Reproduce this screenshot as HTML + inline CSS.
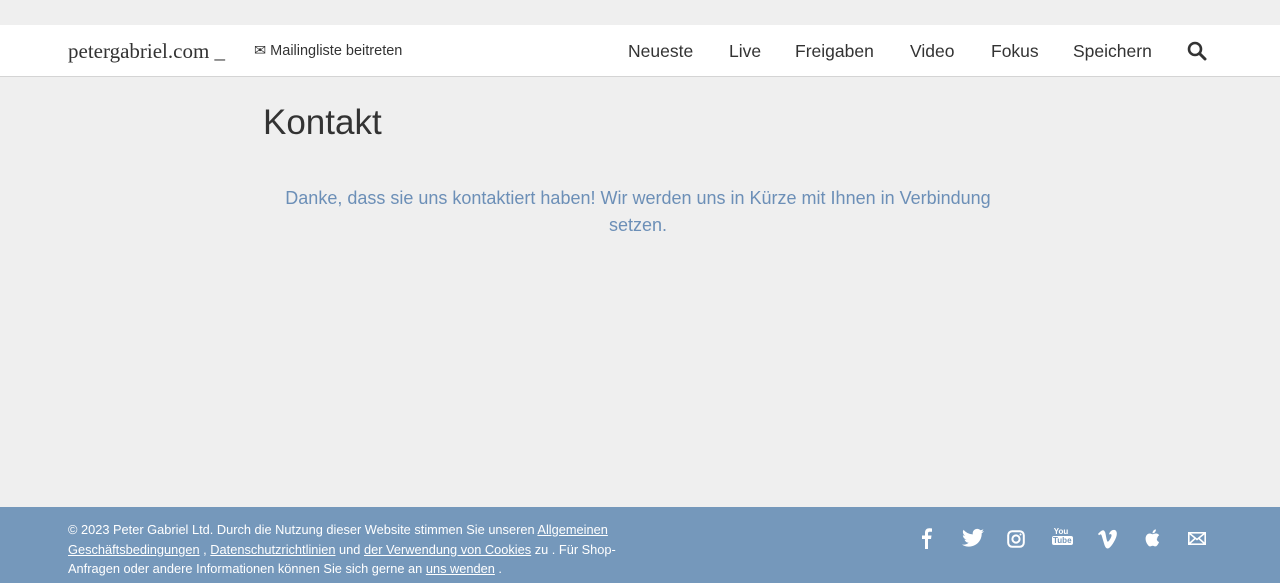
<!DOCTYPE html>
<html><head><meta charset="utf-8"><style>
body{margin:0;width:1280px;height:583px;background:#efefef;font-family:"Liberation Sans",sans-serif;position:relative;overflow:hidden}
.hdr{position:absolute;top:25px;left:0;width:1280px;height:51px;background:#fff;border-bottom:1px solid #d4d4d4}
.logo{position:absolute;left:68px;top:14px;font-family:"Liberation Serif",serif;font-size:21px;color:#333}
.mail{position:absolute;left:254px;top:18px;font-size:14.5px;color:#333}
.nav{position:absolute;top:16px;font-size:17.5px;color:#333}
h1{position:absolute;left:263px;top:103px;margin:0;font-weight:normal;font-size:35px;color:#333}
.msg{position:absolute;left:273px;top:185px;width:730px;text-align:center;color:#6c8fb7;font-size:18px;line-height:27px}
.ft{position:absolute;left:0;top:507px;width:1280px;height:76px;background:#7598bb;color:#fff}
.ft p{position:absolute;left:68px;top:13px;margin:0;width:560px;font-size:12.8px;line-height:19.5px}
.ft a{color:#fff;text-decoration:underline}
.ic{position:absolute;top:20px}
</style></head><body>
<div class="hdr">
<div class="logo">petergabriel.com _</div>
<div class="mail">✉ Mailingliste beitreten</div>
<div class="nav" style="left:628px">Neueste</div>
<div class="nav" style="left:729px">Live</div>
<div class="nav" style="left:795px">Freigaben</div>
<div class="nav" style="left:910px">Video</div>
<div class="nav" style="left:991px">Fokus</div>
<div class="nav" style="left:1073px">Speichern</div>
<svg style="position:absolute;left:1187px;top:16px" width="20" height="20" viewBox="0 0 20 20"><circle cx="8" cy="8" r="6" fill="none" stroke="#333" stroke-width="2.6"/><path d="M12.5 12.5L18 18" stroke="#333" stroke-width="3" stroke-linecap="round"/></svg>
</div>
<h1>Kontakt</h1>
<div class="msg">Danke, dass sie uns kontaktiert haben! Wir werden uns in Kürze mit Ihnen in Verbindung setzen.</div>
<div class="ft">
<p>© 2023 Peter Gabriel Ltd. Durch die Nutzung dieser Website stimmen Sie unseren <a>Allgemeinen Geschäftsbedingungen</a> , <a>Datenschutzrichtlinien</a> und <a>der Verwendung von Cookies</a> zu . Für Shop-Anfragen oder andere Informationen können Sie sich gerne an <a>uns wenden</a> .</p>
<svg class="ic" style="left:919px" width="14" height="22" viewBox="0 0 14 22"><path d="M9 22V12h3l.5-3.5H9V6.5c0-1 .3-1.7 1.8-1.7H13V1.5C12.6 1.4 11.5 1.3 10.3 1.3 7.7 1.3 6 2.9 6 5.8v2.7H3V12h3v10z" fill="#fff"/></svg>
<svg class="ic" style="left:961px" width="24" height="22" viewBox="0 0 24 20"><path d="M23 3c-.8.4-1.7.6-2.6.7.9-.6 1.6-1.4 2-2.5-.9.5-1.9.9-2.9 1.1A4.5 4.5 0 0 0 11.8 6.4 12.8 12.8 0 0 1 2.5 1.7a4.5 4.5 0 0 0 1.4 6c-.7 0-1.4-.2-2-.6 0 2.2 1.5 4 3.6 4.4-.7.2-1.4.2-2 .1.6 1.8 2.3 3.1 4.2 3.1A9 9 0 0 1 1 16.6 12.8 12.8 0 0 0 20.7 5.3c.9-.6 1.7-1.4 2.3-2.3z" fill="#fff"/></svg>
<svg class="ic" style="left:1007px;top:23px" width="18" height="18" viewBox="0 0 18 18"><rect x="1.2" y="1.2" width="15.6" height="15.6" rx="4" fill="none" stroke="#fff" stroke-width="2"/><circle cx="9" cy="9" r="3.6" fill="none" stroke="#fff" stroke-width="2"/><circle cx="13.5" cy="4.5" r="1" fill="#fff"/></svg>
<div class="ic" style="left:1052px;top:20px;width:18px;text-align:center;font-size:8px;font-weight:bold;line-height:9px">You<br><span style="background:#fff;color:#7598bb;padding:0 1px;border-radius:2px">Tube</span></div>
<svg class="ic" style="left:1097px;top:22px" width="22" height="20" viewBox="0 0 22 20"><path d="M1 5l1 1.2c1.5-1 2.2-1.3 2.7.6L7.5 16c.8 2.3 1.8 3.5 3 3.5 2 0 4.6-3 7.7-9 3-6 1.5-9.6-1.3-9.6-2 0-4 1.4-5 4.6 1.5-.7 3-.5 2.6 1.5-.3 1.5-2.6 5.7-3.7 5.7-1.1 0-1.7-5.8-2.6-9.3C7.4 1.3 6.3.8 5 1.5 3.8 2.2 2 3.7 1 5z" fill="#fff"/></svg>
<svg class="ic" style="left:1144px;top:22px" width="16" height="18" viewBox="0 0 16 18"><path d="M13.3 9.5c0-2.2 1.8-3.2 1.9-3.3-1-1.5-2.6-1.7-3.2-1.7-1.4-.1-2.6.8-3.3.8-.7 0-1.7-.8-2.8-.8C4.4 4.5 3 5.3 2.3 6.6c-1.5 2.6-.4 6.5 1.1 8.6.7 1 1.5 2.2 2.6 2.2 1 0 1.4-.7 2.7-.7 1.2 0 1.6.7 2.7.7 1.1 0 1.8-1 2.5-2 .8-1.2 1.1-2.3 1.1-2.4 0 0-2.2-.8-2.2-3.3zM11 3.1c.6-.7 1-1.7.9-2.7-.9 0-1.9.6-2.5 1.300-.5.6-1 1.6-.9 2.6 1 .1 1.9-.5 2.5-1.2z" fill="#fff"/></svg>
<svg class="ic" style="left:1188px;top:25px" width="18" height="13" viewBox="0 0 18 13"><rect x=".8" y=".8" width="16.4" height="11.4" fill="none" stroke="#fff" stroke-width="1.6"/><path d="M1 1l8 6.5L17 1M1 12l6-5.5M17 12l-6-5.5" fill="none" stroke="#fff" stroke-width="1.6"/></svg>
</div>
</body></html>
